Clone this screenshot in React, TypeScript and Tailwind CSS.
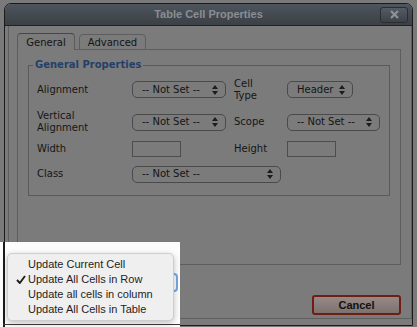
import React from "react";

const ui = { fontFamily: '"DejaVu Sans", Verdana, sans-serif' };
const mac = { fontFamily: '"Liberation Sans", Arial, sans-serif' };

function Arrows() {
  return (
    <svg width="6" height="10" viewBox="0 0 6 10" className="shrink-0">
      <path d="M3 0 L6 4 L0 4 Z" fill="#1c1c1c" />
      <path d="M0 6 L6 6 L3 10 Z" fill="#1c1c1c" />
    </svg>
  );
}

function Select({ value, w }: { value: string; w: string }) {
  return (
    <div
      className={`${w} h-[17px] flex items-center justify-between pl-[9px] pr-[7px] rounded-[5px] border border-[#4a4a4a] text-[10px] text-[#141414] leading-none`}
    >
      <span>{value}</span>
      <Arrows />
    </div>
  );
}

function Input() {
  return <div className="w-[49px] h-[16px] border border-[#4d4d4d]" />;
}

function Label({ children, w }: { children: React.ReactNode; w: string }) {
  return (
    <div className={`${w} text-[10px] leading-[12px] text-[#161616]`}>{children}</div>
  );
}

export default function App() {
  return (
    <div className="relative w-[417px] h-[327px] overflow-hidden bg-[#7a7a7a]" style={ui}>
      {/* dialog */}
      <div className="ml-[4px] mt-[3px] w-[409px] h-[323px] border border-[#1b1b1b] rounded-t-[7px] overflow-hidden flex flex-col bg-[#7b7b7b]">
        {/* title bar */}
        <div className="h-[22px] shrink-0 grid grid-cols-[1fr_auto_1fr] items-center bg-gradient-to-b from-[#4f555d] to-[#3b4047] border-b border-[#1f2226]">
          <div />
          <div className="text-[11px] font-bold text-[#8a8e93]" style={mac}>
            Table Cell Properties
          </div>
          <div className="justify-self-end mr-[4px] w-[28px] h-[16px] rounded-[3px] border border-[#2a2e33] bg-gradient-to-b from-[#555b63] to-[#3d4249] flex items-center justify-center">
            <svg width="9" height="9" viewBox="0 0 9 9">
              <path d="M1 1 L8 8 M8 1 L1 8" stroke="#8e9297" strokeWidth="2.2" />
            </svg>
          </div>
        </div>

        {/* body */}
        <div className="flex-1 pl-[3px] pb-[6px]">
          <div className="h-full border-l border-r border-b border-[#5f5f5f] pl-[8px] pt-[7px] flex flex-col">
            {/* tabs */}
            <div className="flex items-end gap-[4px] h-[17px] relative z-10">
              <div className="w-[58px] h-[17px] border border-b-0 border-[#5a5a5a] border-t-[#3f4954] rounded-t-[4px] bg-[#7b7b7b] flex items-center justify-center text-[10px] text-[#141414]">
                General
              </div>
              <div className="w-[67px] h-[16px] border border-[#5e5e5e] rounded-t-[4px] flex items-center justify-center text-[10px] text-[#141414]">
                Advanced
              </div>
            </div>
            {/* panel */}
            <div className="w-[384px] h-[216px] -mt-px border border-[#5e5e5e] px-[10px] pt-[9px]">
              <fieldset className="border border-[#5a5a5a] h-[137px] pl-[8px]">
                <legend className="ml-[-4px] px-[2px] text-[10px] font-bold text-[#253f69] leading-[12px]">
                  General Properties
                </legend>
                <div className="flex items-center h-[25px] mt-[6px]">
                  <Label w="w-[95px]">Alignment</Label>
                  <Select value="-- Not Set --" w="w-[94px]" />
                  <div className="w-[8px]" />
                  <Label w="w-[53px]">
                    Cell
                    <br />
                    Type
                  </Label>
                  <Select value="Header" w="w-[66px]" />
                </div>
                <div className="flex items-center h-[26px] mt-[7px]">
                  <Label w="w-[95px]">
                    Vertical
                    <br />
                    Alignment
                  </Label>
                  <Select value="-- Not Set --" w="w-[94px]" />
                  <div className="w-[8px]" />
                  <Label w="w-[53px]">Scope</Label>
                  <Select value="-- Not Set --" w="w-[93px]" />
                </div>
                <div className="flex items-center h-[22px] mt-[3px]">
                  <Label w="w-[95px]">Width</Label>
                  <Input />
                  <div className="w-[53px]" />
                  <Label w="w-[53px]">Height</Label>
                  <Input />
                </div>
                <div className="flex items-center h-[22px] mt-[3px]">
                  <Label w="w-[95px]">Class</Label>
                  <Select value="-- Not Set --" w="w-[149px]" />
                </div>
              </fieldset>
            </div>
            {/* footer */}
            <div className="flex justify-end pr-[10px] mt-[30px]">
              <div
                className="w-[89px] h-[20px] rounded-[3px] border-2 border-[#6f1e14] bg-gradient-to-b from-[#968886] to-[#7e7270] flex items-center justify-center text-[11px] font-bold text-[#111]"
                style={mac}
              >
                Cancel
              </div>
            </div>
          </div>
        </div>
      </div>

      {/* undimmed popup area */}
      <div className="absolute left-0 top-[242px] w-[180px] h-[85px] bg-[#fdfdfd]">
        <div className="absolute left-[3px] top-0 w-[2px] h-[85px] bg-[#1b1b1b]" />
        <div className="absolute left-[3px] top-[82px] w-[177px] h-[1px] bg-[#3a3a3a]" />
        <div className="absolute left-[166px] top-[31px] w-[12px] h-[19px] rounded-r-[4px] border-2 border-l-0 border-[#78a9e0]" />
        <div
          className="absolute left-[7px] top-[11px] w-[167px] h-[68px] rounded-[5px] border border-[#cdcdcd] bg-[#efefef] shadow-[0_2px_6px_rgba(0,0,0,0.25)] pt-[3px] text-[11px] text-[#1e1e1e]"
          style={mac}
        >
          {[
            "Update Current Cell",
            "Update All Cells in Row",
            "Update all cells in column",
            "Update All Cells in Table",
          ].map((t, i) => (
            <div key={t} className="h-[15px] flex items-center">
              <div className="w-[20px] flex justify-end pr-[2px]">
                {i === 1 && (
                  <svg width="10" height="9" viewBox="0 0 10 9">
                    <path d="M1 5 L3.8 8 L9 1" stroke="#1e1e1e" strokeWidth="1.9" fill="none" />
                  </svg>
                )}
              </div>
              <span>{t}</span>
            </div>
          ))}
        </div>
      </div>
    </div>
  );
}
